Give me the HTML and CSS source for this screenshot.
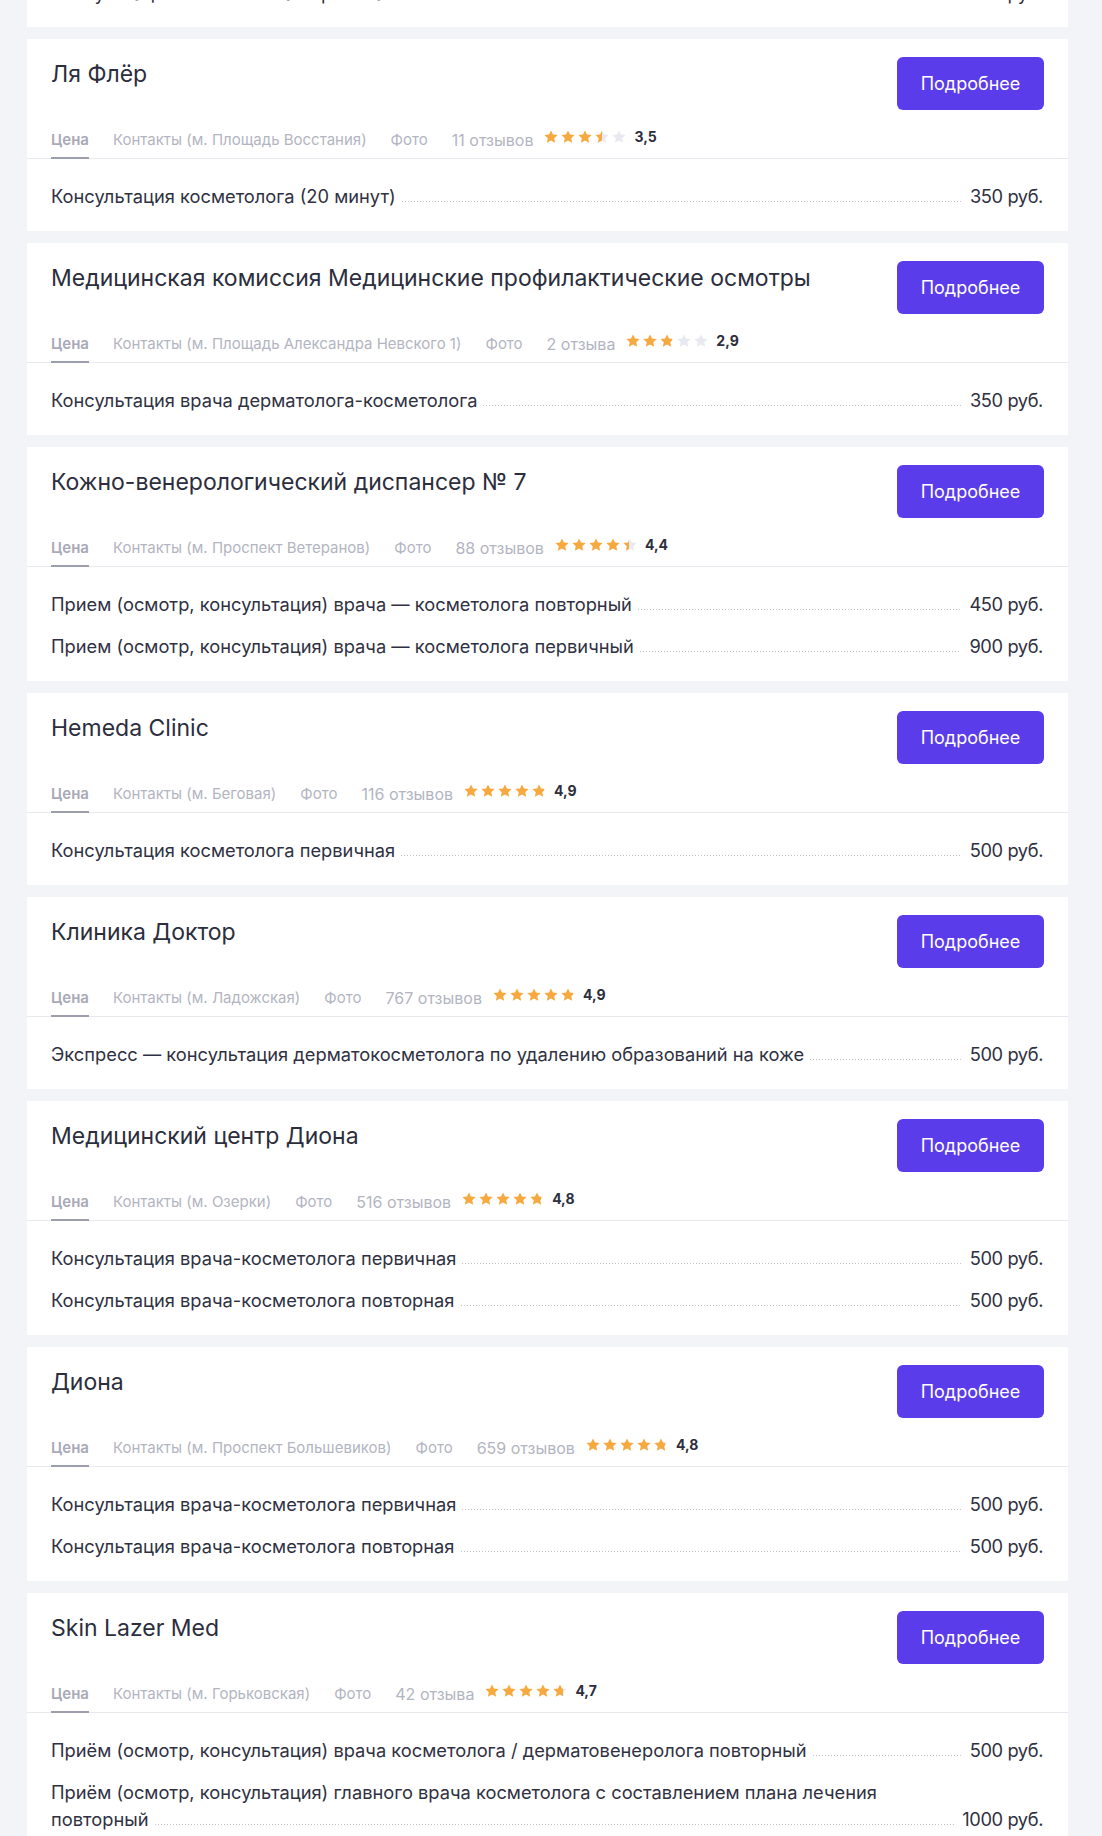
FILE: index.html
```html
<!DOCTYPE html>
<html lang="ru">
<head>
<meta charset="utf-8">
<title>Косметологи</title>
<link rel="stylesheet" href="styles.css">
</head>
<body>
<svg class="defs" width="0" height="0" aria-hidden="true">
  <defs>
    <linearGradient id="g50" x1="0" x2="1" y1="0" y2="0"><stop offset="50%" stop-color="#f5a93f"/><stop offset="50%" stop-color="#e9e9f1"/></linearGradient>
    <linearGradient id="g90" x1="0" x2="1" y1="0" y2="0"><stop offset="90%" stop-color="#f5a93f"/><stop offset="90%" stop-color="#e9e9f1"/></linearGradient>
    <linearGradient id="g40" x1="0" x2="1" y1="0" y2="0"><stop offset="40%" stop-color="#f5a93f"/><stop offset="40%" stop-color="#e9e9f1"/></linearGradient>
    <linearGradient id="g80" x1="0" x2="1" y1="0" y2="0"><stop offset="80%" stop-color="#f5a93f"/><stop offset="80%" stop-color="#e9e9f1"/></linearGradient>
    <linearGradient id="g70" x1="0" x2="1" y1="0" y2="0"><stop offset="70%" stop-color="#f5a93f"/><stop offset="70%" stop-color="#e9e9f1"/></linearGradient>
    <path id="star" d="M7 0.4l2 4.1 4.6.6-3.35 3.15.88 4.55L7 10.55 2.87 12.8l.88-4.55L.4 5.1 5 4.5z"/>
  </defs>
</svg>

<main class="list">

  <section class="card card-cut">
    <div class="rows">
      <div class="row"><div class="name">Консультация косметолога первичная<span class="dots"></span></div><div class="price">500 руб.</div></div>
    </div>
  </section>

  <section class="card">
    <div class="head"><h2 class="title">Ля Флёр</h2><a class="btn" href="#">Подробнее</a></div>
    <nav class="tabs">
      <span class="tab active">Цена</span><span class="tab">Контакты (м. Площадь Восстания)</span><span class="tab">Фото</span><span class="tab reviews">11 отзывов</span>
      <span class="rating">
        <svg class="stars" viewBox="0 0 82 14" width="82" height="14"><use href="#star" x="0" class="on"/><use href="#star" x="17" class="on"/><use href="#star" x="34" class="on"/><use href="#star" x="51" fill="url(#g50)"/><use href="#star" x="68" class="off"/></svg>
        <b class="score">3,5</b>
      </span>
    </nav>
    <div class="rows">
      <div class="row"><div class="name">Консультация косметолога (20 минут)<span class="dots"></span></div><div class="price">350 руб.</div></div>
    </div>
  </section>

  <section class="card">
    <div class="head"><h2 class="title">Медицинская комиссия Медицинские профилактические осмотры</h2><a class="btn" href="#">Подробнее</a></div>
    <nav class="tabs">
      <span class="tab active">Цена</span><span class="tab">Контакты (м. Площадь Александра Невского 1)</span><span class="tab">Фото</span><span class="tab reviews">2 отзыва</span>
      <span class="rating">
        <svg class="stars" viewBox="0 0 82 14" width="82" height="14"><use href="#star" x="0" class="on"/><use href="#star" x="17" class="on"/><use href="#star" x="34" fill="url(#g90)"/><use href="#star" x="51" class="off"/><use href="#star" x="68" class="off"/></svg>
        <b class="score">2,9</b>
      </span>
    </nav>
    <div class="rows">
      <div class="row"><div class="name">Консультация врача дерматолога-косметолога<span class="dots"></span></div><div class="price">350 руб.</div></div>
    </div>
  </section>

  <section class="card">
    <div class="head"><h2 class="title">Кожно-венерологический диспансер № 7</h2><a class="btn" href="#">Подробнее</a></div>
    <nav class="tabs">
      <span class="tab active">Цена</span><span class="tab">Контакты (м. Проспект Ветеранов)</span><span class="tab">Фото</span><span class="tab reviews">88 отзывов</span>
      <span class="rating">
        <svg class="stars" viewBox="0 0 82 14" width="82" height="14"><use href="#star" x="0" class="on"/><use href="#star" x="17" class="on"/><use href="#star" x="34" class="on"/><use href="#star" x="51" class="on"/><use href="#star" x="68" fill="url(#g40)"/></svg>
        <b class="score">4,4</b>
      </span>
    </nav>
    <div class="rows">
      <div class="row"><div class="name">Прием (осмотр, консультация) врача — косметолога повторный<span class="dots"></span></div><div class="price">450 руб.</div></div>
      <div class="row"><div class="name">Прием (осмотр, консультация) врача — косметолога первичный<span class="dots"></span></div><div class="price">900 руб.</div></div>
    </div>
  </section>

  <section class="card">
    <div class="head"><h2 class="title">Hemeda Clinic</h2><a class="btn" href="#">Подробнее</a></div>
    <nav class="tabs">
      <span class="tab active">Цена</span><span class="tab">Контакты (м. Беговая)</span><span class="tab">Фото</span><span class="tab reviews">116 отзывов</span>
      <span class="rating">
        <svg class="stars" viewBox="0 0 82 14" width="82" height="14"><use href="#star" x="0" class="on"/><use href="#star" x="17" class="on"/><use href="#star" x="34" class="on"/><use href="#star" x="51" class="on"/><use href="#star" x="68" fill="url(#g90)"/></svg>
        <b class="score">4,9</b>
      </span>
    </nav>
    <div class="rows">
      <div class="row"><div class="name">Консультация косметолога первичная<span class="dots"></span></div><div class="price">500 руб.</div></div>
    </div>
  </section>

  <section class="card">
    <div class="head"><h2 class="title">Клиника Доктор</h2><a class="btn" href="#">Подробнее</a></div>
    <nav class="tabs">
      <span class="tab active">Цена</span><span class="tab">Контакты (м. Ладожская)</span><span class="tab">Фото</span><span class="tab reviews">767 отзывов</span>
      <span class="rating">
        <svg class="stars" viewBox="0 0 82 14" width="82" height="14"><use href="#star" x="0" class="on"/><use href="#star" x="17" class="on"/><use href="#star" x="34" class="on"/><use href="#star" x="51" class="on"/><use href="#star" x="68" fill="url(#g90)"/></svg>
        <b class="score">4,9</b>
      </span>
    </nav>
    <div class="rows">
      <div class="row"><div class="name">Экспресс — консультация дерматокосметолога по удалению образований на коже<span class="dots"></span></div><div class="price">500 руб.</div></div>
    </div>
  </section>

  <section class="card">
    <div class="head"><h2 class="title">Медицинский центр Диона</h2><a class="btn" href="#">Подробнее</a></div>
    <nav class="tabs">
      <span class="tab active">Цена</span><span class="tab">Контакты (м. Озерки)</span><span class="tab">Фото</span><span class="tab reviews">516 отзывов</span>
      <span class="rating">
        <svg class="stars" viewBox="0 0 82 14" width="82" height="14"><use href="#star" x="0" class="on"/><use href="#star" x="17" class="on"/><use href="#star" x="34" class="on"/><use href="#star" x="51" class="on"/><use href="#star" x="68" fill="url(#g80)"/></svg>
        <b class="score">4,8</b>
      </span>
    </nav>
    <div class="rows">
      <div class="row"><div class="name">Консультация врача-косметолога первичная<span class="dots"></span></div><div class="price">500 руб.</div></div>
      <div class="row"><div class="name">Консультация врача-косметолога повторная<span class="dots"></span></div><div class="price">500 руб.</div></div>
    </div>
  </section>

  <section class="card">
    <div class="head"><h2 class="title">Диона</h2><a class="btn" href="#">Подробнее</a></div>
    <nav class="tabs">
      <span class="tab active">Цена</span><span class="tab">Контакты (м. Проспект Большевиков)</span><span class="tab">Фото</span><span class="tab reviews">659 отзывов</span>
      <span class="rating">
        <svg class="stars" viewBox="0 0 82 14" width="82" height="14"><use href="#star" x="0" class="on"/><use href="#star" x="17" class="on"/><use href="#star" x="34" class="on"/><use href="#star" x="51" class="on"/><use href="#star" x="68" fill="url(#g80)"/></svg>
        <b class="score">4,8</b>
      </span>
    </nav>
    <div class="rows">
      <div class="row"><div class="name">Консультация врача-косметолога первичная<span class="dots"></span></div><div class="price">500 руб.</div></div>
      <div class="row"><div class="name">Консультация врача-косметолога повторная<span class="dots"></span></div><div class="price">500 руб.</div></div>
    </div>
  </section>

  <section class="card">
    <div class="head"><h2 class="title">Skin Lazer Med</h2><a class="btn" href="#">Подробнее</a></div>
    <nav class="tabs">
      <span class="tab active">Цена</span><span class="tab">Контакты (м. Горьковская)</span><span class="tab">Фото</span><span class="tab reviews">42 отзыва</span>
      <span class="rating">
        <svg class="stars" viewBox="0 0 82 14" width="82" height="14"><use href="#star" x="0" class="on"/><use href="#star" x="17" class="on"/><use href="#star" x="34" class="on"/><use href="#star" x="51" class="on"/><use href="#star" x="68" fill="url(#g70)"/></svg>
        <b class="score">4,7</b>
      </span>
    </nav>
    <div class="rows">
      <div class="row"><div class="name">Приём (осмотр, консультация) врача косметолога / дерматовенеролога повторный<span class="dots"></span></div><div class="price">500 руб.</div></div>
      <div class="row"><div class="name">Приём (осмотр, консультация) главного врача косметолога с составлением плана лечения повторный<span class="dots"></span></div><div class="price">1000 руб.</div></div>
    </div>
  </section>

</main>
</body>
</html>
```
FILE: styles.css
```css
* { box-sizing: border-box; }

html, body {
  margin: 0;
  padding: 0;
  background: #f3f4f8;
  font-family: Inter, Roboto, "Noto Sans", "Liberation Sans", sans-serif;
  color: #2c2e3d;
}

.defs {
  position: absolute;
  width: 0;
  height: 0;
  overflow: hidden;
}

.list {
  width: 1041px;
  margin-left: 27px;
  display: flex;
  flex-direction: column;
  gap: 12px;
}

.card {
  background: #ffffff;
  padding-top: 18px;
}

.card-cut {
  margin-top: -164px;
  height: 191px;
  padding-top: 120px;
}

.head {
  display: flex;
  justify-content: space-between;
  align-items: flex-start;
  gap: 24px;
  height: 53px;
  padding: 0 24px;
}

.title {
  margin: 0;
  font-size: 23px;
  line-height: 34px;
  font-weight: 400;
  color: #2c2e3d;
}

.btn {
  flex: none;
  width: 147px;
  height: 53px;
  border-radius: 6px;
  background: #5b3cea;
  color: #ffffff;
  font-size: 18px;
  line-height: 53px;
  text-align: center;
  text-decoration: none;
}

.tabs {
  display: flex;
  align-items: flex-end;
  height: 49px;
  padding: 0 24px;
  border-bottom: 1px solid #e8e8ef;
}

.tab {
  position: relative;
  font-size: 15px;
  line-height: 20px;
  color: #b3b5c1;
  padding-bottom: 8px;
  margin-right: 24px;
  white-space: nowrap;
}

.tab.reviews {
  font-size: 16px;
  margin-right: 11px;
}

.tab.active {
  font-weight: 600;
  color: #a8aab7;
}

.tab.active::after {
  content: "";
  position: absolute;
  left: 0;
  right: 0;
  bottom: -1px;
  height: 2px;
  background: #9d9fae;
}

.rating {
  align-self: flex-start;
  display: flex;
  align-items: center;
  gap: 8px;
  padding-top: 17px;
}

.stars {
  display: block;
  flex: none;
}

.stars .on { fill: #f5a93f; }
.stars .off { fill: #e9e9f1; }

.score {
  font-size: 14px;
  line-height: 20px;
  font-weight: 700;
  color: #2c2e3d;
}

.rows {
  padding: 24px 25px 21px 24px;
  display: flex;
  flex-direction: column;
  gap: 15px;
}

.row {
  display: flex;
  align-items: flex-end;
  font-size: 18.3px;
  line-height: 27px;
  color: #2f3142;
}

.name {
  flex: 1 1 auto;
  min-width: 0;
  overflow: hidden;
}

.dots {
  display: inline-block;
  width: 1200px;
  height: 1px;
  margin-left: 6px;
  margin-right: -1206px;
  margin-bottom: 1px;
  background-image: linear-gradient(to right, #c3c4ce 1px, transparent 1px);
  background-size: 3px 1px;
  background-repeat: repeat-x;
}

.price {
  flex: none;
  margin-left: 8px;
  letter-spacing: -0.4px;
  white-space: nowrap;
}
```
